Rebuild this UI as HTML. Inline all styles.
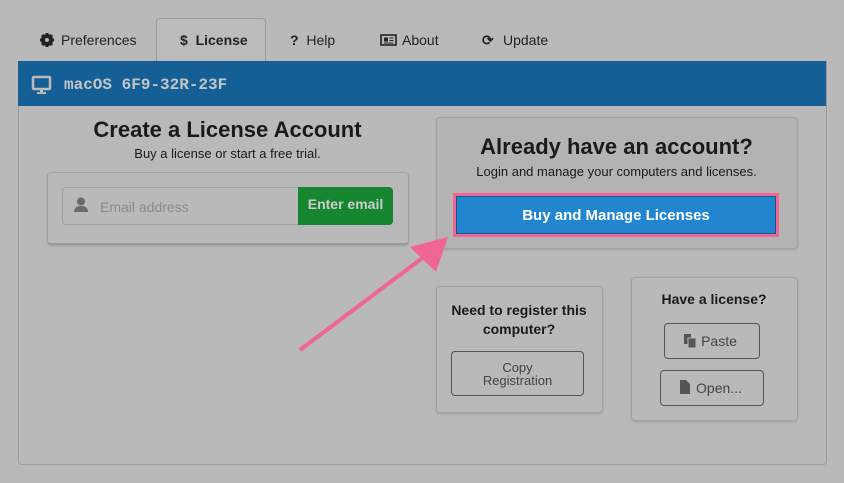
<!DOCTYPE html><html><head><style>
body{margin:0;width:844px;height:483px;background:#b9b9b9;font-family:"Liberation Sans",sans-serif;position:relative;overflow:hidden;color:#1a1a1a}
.a{position:absolute}
.tab{position:absolute;top:32px;font-size:14px;color:#222}
.box{position:absolute;border:1px solid #a2a2a2;border-radius:4px;box-shadow:0 1px 2px rgba(0,0,0,.15)}
.btn{position:absolute;border:1px solid #555;border-radius:4px;color:#444;font-size:14px;text-align:center;box-sizing:border-box}
.c{text-align:center;position:absolute}
</style></head><body>
<div class="a" style="left:156px;top:18px;width:108px;height:44px;border:1px solid #9c9c9c;border-bottom:none;border-radius:4px 4px 0 0;background:#bbb"></div>
<svg class="a" style="left:40px;top:33px" width="14" height="14"><circle cx="7" cy="7" r="4.5" fill="none" stroke="#222" stroke-width="3"/><g stroke="#222" stroke-width="3"><line x1="7" y1="0" x2="7" y2="14"/><line x1="0" y1="7" x2="14" y2="7"/><line x1="2" y1="2" x2="12" y2="12"/><line x1="12" y1="2" x2="2" y2="12"/></g><circle cx="7" cy="7" r="2" fill="#b9b9b9"/></svg>
<div class="tab" style="left:61px">Preferences</div>
<div class="tab" style="left:180px;font-weight:bold">$&nbsp; License</div>
<div class="tab" style="left:290px"><b>?</b>&nbsp; Help</div>
<svg class="a" style="left:380px;top:34px" width="17" height="12"><rect x="1" y="1" width="15" height="10" fill="none" stroke="#222" stroke-width="1.6"/><rect x="4" y="3.5" width="4" height="4" fill="#222"/><line x1="9.5" y1="4" x2="13.5" y2="4" stroke="#222"/><line x1="9.5" y1="6.5" x2="13.5" y2="6.5" stroke="#222"/><line x1="4" y1="9" x2="13.5" y2="9" stroke="#222"/></svg>
<div class="tab" style="left:402px">About</div>
<div class="tab" style="left:482px;font-weight:bold">⟳</div>
<div class="tab" style="left:503px">Update</div>
<div class="a" style="left:18px;top:61px;width:807px;height:402px;border:1px solid #9c9c9c;border-radius:0 0 4px 4px"></div>
<div class="a" style="left:18px;top:61px;width:808px;height:45px;background:#155f97"></div>
<svg class="a" style="left:31px;top:75px" width="22" height="20"><rect x="2" y="2" width="17" height="12" rx="1" fill="none" stroke="#bbb" stroke-width="2.5"/><rect x="9" y="14" width="3" height="3" fill="#bbb"/><rect x="6" y="17" width="9" height="2" fill="#bbb"/></svg>
<div class="a" style="left:64px;top:76px;font-family:'Liberation Mono',monospace;font-weight:bold;font-size:16px;color:#c4c4c4">macOS 6F9-32R-23F</div>
<div class="c" style="left:47px;width:361px;top:117px;font-size:22px;font-weight:bold">Create a License Account</div>
<div class="c" style="left:47px;width:361px;top:146px;font-size:13px">Buy a license or start a free trial.</div>
<div class="box" style="left:47px;top:172px;width:360px;height:70px;border-bottom:2px solid #999"></div>
<div class="a" style="left:62px;top:187px;width:236px;height:36px;border:1px solid #a0a0a0;border-right:none;border-radius:4px 0 0 4px"></div>
<svg class="a" style="left:74px;top:197px" width="14" height="15"><circle cx="7" cy="4.5" r="4" fill="#6a6a6a"/><path d="M0 15 Q0 9 7 9 Q14 9 14 15Z" fill="#6a6a6a"/></svg>
<div class="a" style="left:100px;top:199px;font-size:14px;color:#8b8b8b">Email address</div>
<div class="a" style="left:298px;top:187px;width:95px;height:38px;background:#168631;border-radius:0 4px 4px 0;color:#ccc;font-weight:bold;font-size:14px;text-align:center;line-height:34px">Enter email</div>
<div class="box" style="left:436px;top:117px;width:360px;height:130px;background:#b3b3b3"></div>
<div class="c" style="left:436px;width:361px;top:134px;font-size:22px;font-weight:bold">Already have an account?</div>
<div class="c" style="left:436px;width:361px;top:164px;font-size:13px">Login and manage your computers and licenses.</div>
<div class="a" style="left:453px;top:193px;width:320px;height:38px;border:3px solid #f06592;background:#2185d0;color:#fff;font-weight:bold;font-size:15px;text-align:center;line-height:40px;box-shadow:inset 0 0 0 1px #1a5a8a">Buy and Manage Licenses</div>
<div class="box" style="left:436px;top:286px;width:165px;height:125px"></div>
<div class="c" style="left:436px;width:166px;top:301px;font-size:14px;font-weight:bold;line-height:19px">Need to register this computer?</div>
<div class="btn" style="left:451px;top:351px;width:133px;height:45px;padding-top:9px;line-height:13px;font-size:13px">Copy<br>Registration</div>
<div class="box" style="left:631px;top:277px;width:165px;height:142px"></div>
<div class="c" style="left:631px;width:166px;top:291px;font-size:14px;font-weight:bold">Have a license?</div>
<div class="btn" style="left:664px;top:323px;width:96px;height:36px;line-height:34px;padding-left:14px">Paste</div>
<svg class="a" style="left:684px;top:334px" width="12" height="14"><rect x="0" y="0" width="7" height="10" fill="#555"/><rect x="4" y="4" width="8" height="10" fill="#555" stroke="#b9b9b9"/></svg>
<div class="btn" style="left:660px;top:370px;width:104px;height:36px;line-height:34px;padding-left:14px">Open...</div>
<svg class="a" style="left:680px;top:380px" width="10" height="14"><path d="M0 0H6L10 4V14H0Z" fill="#555"/></svg>
<svg class="a" style="left:0;top:0" width="844" height="483"><line x1="300" y1="350" x2="425" y2="256" stroke="#f06592" stroke-width="4"/><polygon points="448,237 410,247 436,272" fill="#f06592"/></svg>
</body></html>
